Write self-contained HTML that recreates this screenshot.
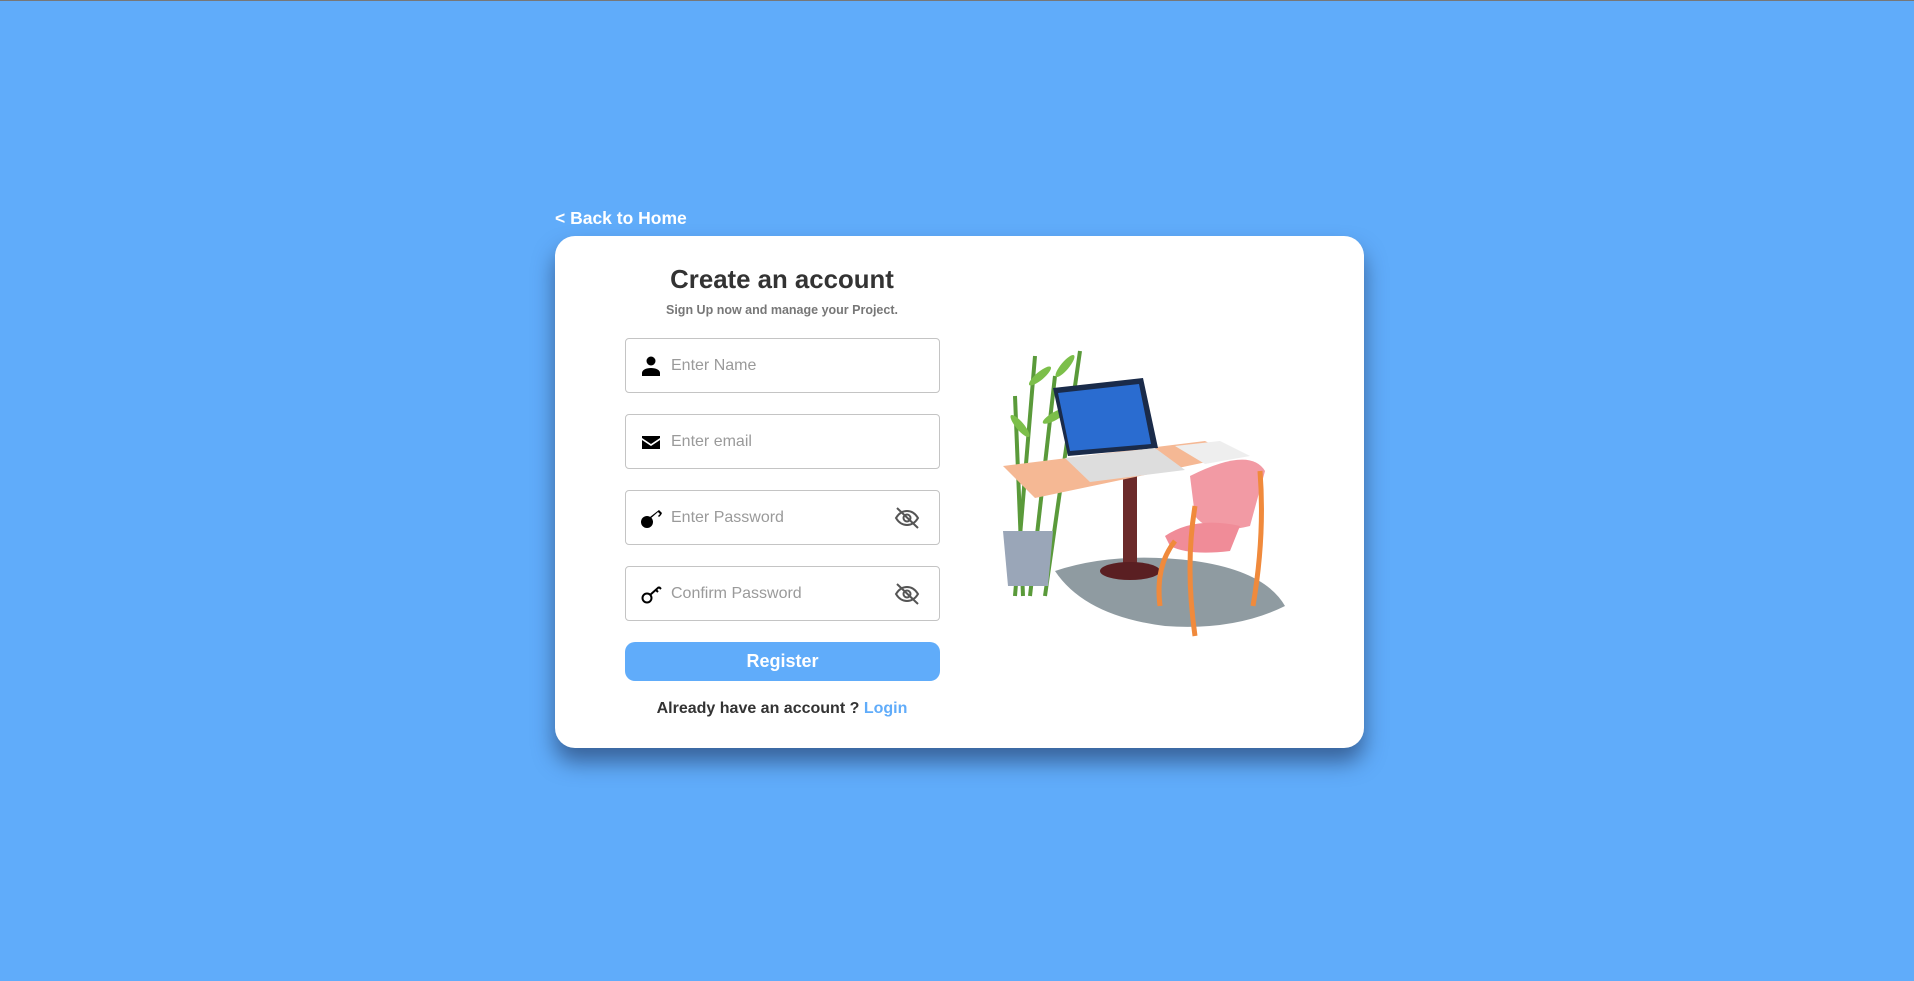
<!DOCTYPE html>
<html><head><meta charset="utf-8"><style>
*{box-sizing:border-box;margin:0;padding:0}
body{width:1914px;height:981px;background:#60acfa;font-family:"Liberation Sans",sans-serif;position:relative;overflow:hidden;border-top:1px solid #777}
.back{position:absolute;left:555px;top:207px;color:#fff;font-weight:bold;font-size:17.5px}
.card{position:absolute;left:555px;top:235px;width:809px;height:512px;background:#fff;border-radius:20px;box-shadow:0 14px 22px rgba(30,50,90,.6)}
h1{position:absolute;top:263px;text-align:center;font-size:25.8px;color:#333;line-height:32px}
.sub{position:absolute;width:454px;top:302px;text-align:center;font-size:12.5px;font-weight:bold;color:#777}
.inp{position:absolute;left:625px;width:315px;height:55px;border:1px solid #c4c4c4;border-radius:4px;background:#fff}
.inp span{position:absolute;left:45px;top:18px;font-size:16px;color:#9a9a9a}
.inp svg.ic{position:absolute;left:14px;top:16px}
.inp svg.eye{position:absolute;left:268px;top:15px}
.btn{position:absolute;left:625px;top:641px;width:315px;height:39px;border-radius:10px;background:#60acfa;color:#fff;font-weight:bold;font-size:18px;text-align:center;line-height:39px}
.login{position:absolute;top:699px;text-align:center;font-size:16px;font-weight:bold;color:#333}
.login b{color:#60acfa}
</style></head><body>
<div class="back">&lt; Back to Home</div>
<div class="card"></div>
<h1 style="left:555px;width:454px">Create an account</h1>
<div class="sub" style="left:555px">Sign Up now and manage your Project.</div>

<div class="inp" style="top:337px"><svg class="ic" width="22" height="22" viewBox="0 0 22 22"><circle cx="11" cy="6" r="4.5"/><path d="M2 21v-3c0-3 4-5 9-5s9 2 9 5v3z"/></svg><span>Enter Name</span></div>
<div class="inp" style="top:413px"><svg class="ic" width="22" height="22" viewBox="0 0 22 22"><path d="M2 5h18v2l-9 6-9-6z"/><path d="M2 9l9 6 9-6v9H2z"/></svg><span>Enter email</span></div>
<div class="inp" style="top:489px"><svg class="ic" width="24" height="22" viewBox="0 0 24 22"><circle cx="7" cy="15" r="6"/><path d="M10 12l8-7 2 2-2 2 1 1 2-2 1-2-3-3-9 7z"/></svg><span>Enter Password</span><svg class="eye" width="26" height="24" viewBox="0 0 26 24" fill="none" stroke="#555" stroke-width="2"><path d="M2 12c3-5 7-7 11-7s8 2 11 7c-3 5-7 7-11 7S5 17 2 12z"/><circle cx="13" cy="12" r="3.5"/><path d="M3 2l21 20"/></svg></div>
<div class="inp" style="top:565px"><svg class="ic" width="24" height="22" viewBox="0 0 24 22" fill="none" stroke="#000" stroke-width="2"><circle cx="7" cy="15" r="4.5"/><path d="M10 12l9-8M16 7l2 2M19 4l2 2"/></svg><span>Confirm Password</span><svg class="eye" width="26" height="24" viewBox="0 0 26 24" fill="none" stroke="#555" stroke-width="2"><path d="M2 12c3-5 7-7 11-7s8 2 11 7c-3 5-7 7-11 7S5 17 2 12z"/><circle cx="13" cy="12" r="3.5"/><path d="M3 2l21 20"/></svg></div>
<div class="btn">Register</div>
<div class="login" style="left:555px;width:454px">Already have an account ? <b>Login</b></div>

<svg style="position:absolute;left:995px;top:335px" width="300" height="315" viewBox="0 0 300 315">
<path d="M60 235 Q120 215 200 225 Q270 235 290 270 Q240 295 170 290 Q90 280 60 235z" fill="#6a7a82" opacity=".75"/>
<g stroke="#5a9a3a" stroke-width="4"><path d="M20 260 L40 20"/><path d="M35 260 L60 40"/><path d="M50 260 L85 15"/><path d="M28 260 L20 60"/></g>
<g fill="#7cbf4a"><ellipse cx="45" cy="40" rx="14" ry="4" transform="rotate(-40 45 40)"/><ellipse cx="70" cy="30" rx="14" ry="4" transform="rotate(-50 70 30)"/><ellipse cx="25" cy="90" rx="14" ry="4" transform="rotate(50 25 90)"/><ellipse cx="60" cy="80" rx="14" ry="4" transform="rotate(-30 60 80)"/><ellipse cx="35" cy="140" rx="12" ry="4" transform="rotate(40 35 140)"/><ellipse cx="80" cy="60" rx="12" ry="4" transform="rotate(-35 80 60)"/></g>
<path d="M8 195h50l-5 55h-40z" fill="#9aa6b8"/>
<rect x="128" y="135" width="14" height="100" fill="#6b2a2a"/>
<ellipse cx="135" cy="235" rx="30" ry="9" fill="#5a1f22"/>
<path d="M8 130 L210 105 L240 120 L40 162z" fill="#f5b894"/>
<path d="M58 52l90-10 15 70-90 8z" fill="#1a2b4a"/><path d="M63 57l81-9 12 60-81 7z" fill="#2a6cd0"/>
<path d="M70 122l90-10 30 22-95 12z" fill="#ddd"/>
<path d="M180 110l45-5 30 15-45 8z" fill="#eee"/>
<path d="M195 140 Q255 110 270 135 L255 190 Q215 200 200 180z" fill="#f29aa4"/>
<path d="M170 200 Q200 180 245 190 L235 215 Q195 220 175 210z" fill="#f08c98"/>
<g stroke="#f08a3c" stroke-width="5" fill="none"><path d="M180 205 Q160 230 165 270"/><path d="M200 170 Q190 230 200 300"/><path d="M265 135 Q270 200 258 270"/></g>
</svg>
</body></html>
